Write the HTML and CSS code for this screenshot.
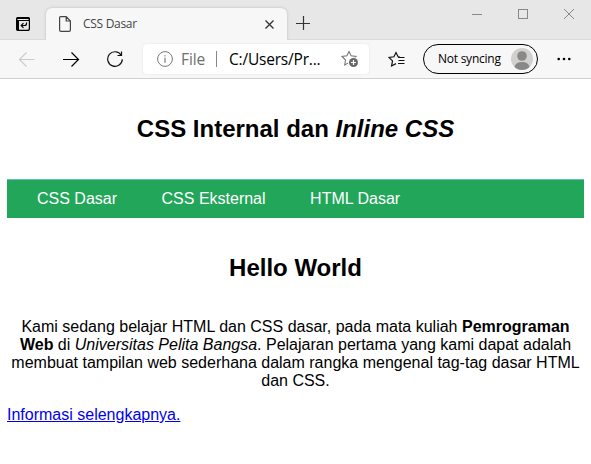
FILE: index.html
```html
<!DOCTYPE html>
<html lang="id">
<head>
<meta charset="utf-8">
<title>CSS Dasar</title>
<link rel="stylesheet" href="styles.css">
</head>
<body>
<header class="browser">
  <div class="tabstrip">
    <svg class="tab-actions" width="16" height="16" viewBox="0 0 16 16"><rect x="1.600" y="1.600" width="12.800" height="12.800" rx="2" fill="none" stroke="#000" stroke-width="1.200"/><path d="M3 1h10a2 2 0 0 1 2 2v2H4v10H3a2 2 0 0 1-2-2V3a2 2 0 0 1 2-2Z" fill="#000"/><path d="M2.500 3.500H13.500" stroke="#eee"/><path d="M11.500 6.500v1q0 2-2 2H6.500M8.500 7.200 6.200 9.500l2.300 2.300" fill="none" stroke="#000" stroke-width="1.200"/></svg>
    <div class="tab">
      <svg width="12" height="16" viewBox="0 0 12 16" fill="none" stroke="#444" stroke-width="1.200"><path d="M1.500.6H7.200L11.400 5v9q0 1.400-1.400 1.400H2Q.6 15.400.6 14V1.500Q.6.6 1.500.6ZM7.200.6V5h4.200"/></svg>
      <span class="tab-title">CSS Dasar</span>
      <svg width="9" height="9" viewBox="0 0 9 9" stroke="#333" stroke-width="1.300"><path d="m.5.5 8 8m0-8-8 8"/></svg>
    </div>
    <svg class="new-tab" width="14" height="14" viewBox="0 0 14 14" stroke="#333" stroke-width="1.200"><path d="M0 7.500h14M7.500 0v14"/></svg>
    <div class="window-buttons">
      <svg width="10" height="10" viewBox="0 0 10 10" stroke="#888"><path d="M0 5.500h10"/></svg>
      <svg width="10" height="10" viewBox="0 0 10 10" stroke="#888" fill="none"><rect x=".5" y=".5" width="9" height="9"/></svg>
      <svg width="10" height="10" viewBox="0 0 10 10" stroke="#888"><path d="m0 0 10 10m0-10L0 10"/></svg>
    </div>
  </div>
  <div class="toolbar">
    <svg class="back" width="17" height="16" viewBox="0 0 17 16" fill="none" stroke="#ccc" stroke-width="1.200"><path d="M16.500 8.500H1.500M8.500 1.500l-7 7 7 7"/></svg>
    <svg class="forward" width="17" height="16" viewBox="0 0 17 16" fill="none" stroke="#000" stroke-width="1.200"><path d="M0 8.500h15.500M8.500 1.500l7 7-7 7"/></svg>
    <svg class="reload" width="17" height="17" viewBox="0 0 17 17" fill="none" stroke="#111" stroke-width="1.200"><path d="M14.200 4.200A7.300 7.300 0 1 0 15.300 8.200M14.500.5v4h-4"/></svg>
    <div class="address">
      <svg width="16" height="16" viewBox="0 0 16 16" fill="none" stroke="#777"><circle cx="8" cy="8" r="7.400"/><path d="M8 6.800v5M8 4.200v1.200" stroke-width="1.200"/></svg>
      <span class="scheme">File</span>
      <span class="divider"></span>
      <span class="url">C:/Users/Pr...</span>
      <svg class="favorite" width="18" height="18" viewBox="0 0 18 18"><path d="m8 1.500 2.100 4.300 4.900.7-3.500 3.400.8 4.800L8 12.600l-4.300 2.300.8-4.900L1 6.500l4.900-.7Z" fill="#fff" stroke="#777" stroke-width="1.100"/><circle cx="12.500" cy="12.500" r="5.500" fill="#fff"/><circle cx="12.500" cy="12.500" r="4.500" fill="#666"/><path d="M10 12.500h5M12.500 10v5" stroke="#fff" stroke-width="1.200"/></svg>
    </div>
    <svg class="favorites" width="17" height="17" viewBox="0 0 17 17" fill="none" stroke="#111" stroke-width="1.200"><path d="M12 6.200 10.100 5.800 8 1.500 5.900 5.800 1 6.500 4.500 9.900l-.9 5.100L8 12.600M10 6.500h6.500M10.500 9.500H16.500M10 12.500h6.500"/></svg>
    <div class="profile">
      <span>Not syncing</span>
      <svg width="22" height="22" viewBox="0 0 22 22"><circle cx="11" cy="11" r="11" fill="#d2d0ce"/><circle cx="11" cy="8" r="4.800" fill="#8a8886"/><path d="M3.500 19q1-5 7.500-5t7.500 5q-3 3-7.500 3t-7.500-3Z" fill="#8a8886"/></svg>
    </div>
    <svg class="more" width="14" height="4" viewBox="0 0 14 4"><circle cx="1.700" cy="2" r="1.300"/><circle cx="7" cy="2" r="1.300"/><circle cx="12.300" cy="2" r="1.300"/></svg>
  </div>
</header>
<main>
  <h1>CSS Internal dan <i>Inline CSS</i></h1>
  <nav><a>CSS Dasar</a><a>CSS Eksternal</a><a>HTML Dasar</a></nav>
  <h2>Hello World</h2>
  <p>Kami sedang belajar HTML dan CSS dasar, pada mata kuliah <b>Pemrograman Web</b> di <i>Universitas Pelita Bangsa</i>. Pelajaran pertama yang kami dapat adalah membuat tampilan web sederhana dalam rangka mengenal tag-tag dasar HTML dan CSS.</p>
  <a class="info" href="#">Informasi selengkapnya.</a>
</main>
</body>
</html>
```
FILE: styles.css
```css
* { box-sizing: border-box; }
body {
  margin: 0;
  height: 464px;
  overflow: hidden;
  background: #fff;
  color: #000;
  font: 16px/18px "Liberation Sans", Arial, sans-serif;
}
svg { display: block; flex: none; }
.browser {
  height: 79px;
  border-bottom: 1px solid #d0d0d0;
  background: #f7f7f7;
  font-family: "Open Sans", "Noto Sans", sans-serif;
}
.tabstrip {
  display: flex;
  height: 40px;
  background: #e7e7e7;
  box-shadow: inset 0 -1px #dbdbdb;
}
.tab-actions { margin: 16px 0 0 15px; }
.tab {
  display: flex;
  align-items: center;
  width: 241px;
  height: 32px;
  margin: 8px 0 0 15px;
  padding: 0 13px;
  border-radius: 6px 6px 0 0;
  background: #f7f7f7;
  box-shadow: 0 0 3px #bbb;
  clip-path: inset(-3px -3px 0 -3px);
}
.tab-title {
  margin: 0 auto 0 12px;
  color: #444;
  font-size: 12px;
  letter-spacing: -.3px;
  white-space: nowrap;
}
.new-tab { margin: 16px 0 0 9px; }
.window-buttons {
  display: flex;
  gap: 36px;
  margin: 9px 17px 0 auto;
}
.toolbar {
  display: flex;
  align-items: center;
  height: 38px;
}
.back { margin-left: 18px; }
.forward { margin-left: 28px; }
.reload { margin-left: 27px; }
.address {
  display: flex;
  align-items: center;
  width: 226px;
  height: 30px;
  margin-left: 19px;
  padding: 0 10px 0 14px;
  border-radius: 4px;
  background: #fff;
  box-shadow: 0 0 2px #ddd;
  font-size: 15.5px;
  white-space: nowrap;
}
.scheme { width: 25px; margin-left: 8px; color: #6e6e6e; letter-spacing: -.1px; }
.divider { width: 1px; height: 16px; margin: 0 12px 0 10px; background: #888; }
.url { letter-spacing: -.2px; }
.favorite { margin-left: auto; }
.favorites { margin-left: 19px; }
.profile {
  display: flex;
  align-items: center;
  justify-content: space-between;
  width: 115px;
  height: 30px;
  margin-left: 18px;
  padding: 0 4px 0 14px;
  border: 1px solid #000;
  border-radius: 15px;
  font-size: 12px;
  letter-spacing: -.25px;
  white-space: nowrap;
}
.more { margin-left: 19px; }
main { padding: 36px 7px 0; }
h1, h2 {
  margin: 0;
  font-size: 24px;
  line-height: 28px;
  text-align: center;
}
nav {
  display: flex;
  gap: 44.5px;
  height: 39px;
  margin: 36px 0;
  padding: 10px 30px;
  border-top: 1px solid #62bfc0;
  background: #22a75a;
  color: #fff;
}
p { margin: 36px 0 16px; text-align: center; }
.info { color: #00e; }
```
